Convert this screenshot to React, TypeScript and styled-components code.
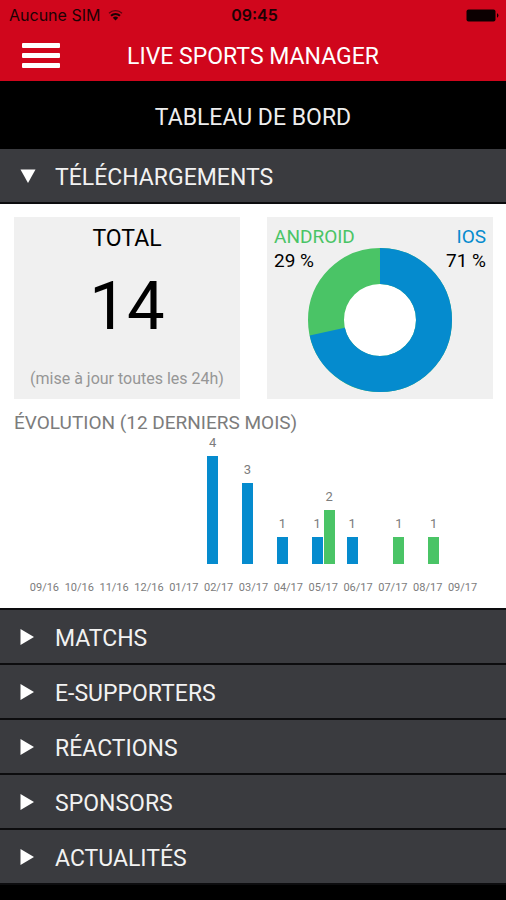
import React, { useState } from "react";
import styled, { createGlobalStyle } from "styled-components";

const colors = {
  red: "#d0061c",
  panel: "#3a3b3f",
  line: "#0c0c0e",
  card: "#f0f0f0",
  blue: "#058bce",
  green: "#4ac466",
  grey: "#7c7c7c",
};

const GlobalStyle = createGlobalStyle`
  * { box-sizing: border-box; }
  body {
    margin: 0;
    background: #000;
    font-family: Roboto, "Liberation Sans", sans-serif;
  }
  h1, h2, h3, p, dl, dt, dd { margin: 0; font-weight: 400; }
`;

const Header = styled.header`
  background: ${colors.red};
`;

const StatusBar = styled.div`
  display: grid;
  grid-template-columns: 1fr auto 1fr;
  align-items: center;
  height: 30px;
  padding: 0 6px 0 9px;
  color: #1c0204;
  font: 400 16px/30px Inter, sans-serif;
`;

const Carrier = styled.div`
  display: flex;
  align-items: center;
  gap: 8px;
`;

const Clock = styled.time`
  font-weight: 600;
`;

const BatterySlot = styled.div`
  display: flex;
  justify-content: flex-end;
`;

const NavBar = styled.div`
  display: grid;
  grid-template-columns: 38px 1fr 38px;
  align-items: center;
  height: 51px;
  padding: 0 22px;
`;

const MenuButton = styled.button`
  display: grid;
  gap: 5px;
  padding: 0;
  border: 0;
  background: none;
  cursor: pointer;
`;

const MenuBar = styled.span`
  height: 5px;
  border-radius: 1px;
  background: #fff;
`;

const AppTitle = styled.h1`
  padding-top: 2px;
  color: #fff;
  font-size: 23px;
  line-height: 28px;
  text-align: center;
`;

const PageTitle = styled.h2`
  padding: 23px 0 17px;
  background: #000;
  color: #eee;
  font-size: 23px;
  line-height: 28px;
  text-align: center;
`;

const SectionButton = styled.button`
  display: flex;
  align-items: center;
  width: 100%;
  height: 55px;
  padding: 5px 20px 0;
  border: 0;
  border-bottom: 2px solid ${colors.line};
  background: ${colors.panel};
  color: #f2f2f2;
  font: 400 23px/28px Roboto, sans-serif;
  text-align: left;
  cursor: pointer;
`;

const Marker = styled.svg`
  flex: none;
  width: 16px;
  height: 16px;
  margin: 0 19px 5px 0;
  fill: #fff;
`;

const Panel = styled.section`
  padding: 13px 13px 12px 14px;
  border-bottom: 2px solid ${colors.line};
  background: #fff;
`;

const Cards = styled.div`
  display: grid;
  grid-template-columns: 1fr 1fr;
  gap: 27px;
`;

const TotalCard = styled.article`
  display: flex;
  flex-direction: column;
  align-items: center;
  height: 182px;
  padding: 8px 0;
  background: ${colors.card};
`;

const CardTitle = styled.h3`
  font-size: 23px;
  line-height: 28px;
`;

const TotalValue = styled.p`
  padding-top: 15px;
  font-size: 67px;
  line-height: 76px;
`;

const Note = styled.p`
  margin-top: auto;
  color: #969696;
  font-size: 16px;
  line-height: 24px;
`;

const ShareCard = styled.article`
  display: grid;
  justify-items: center;
  align-items: start;
  height: 182px;
  background: ${colors.card};
  & > * { grid-area: 1 / 1; }
`;

const Shares = styled.dl`
  display: flex;
  justify-content: space-between;
  width: 100%;
  padding: 8px 7px;
  font-size: 19px;
  line-height: 24px;
`;

const Share = styled.div<{ $align: "left" | "right" }>`
  text-align: ${(p) => p.$align};
`;

const ShareName = styled.dt<{ $color: string }>`
  color: ${(p) => p.$color};
`;

const Donut = styled.svg`
  width: 144px;
  height: 144px;
  margin-top: 31px;
`;

const ChartTitle = styled.h3`
  padding-top: 12px;
  color: ${colors.grey};
  font-size: 19px;
  line-height: 24px;
`;

const Chart = styled.div`
  display: grid;
  grid-template-columns: repeat(13, 1fr);
  padding: 0 13px;
`;

const Month = styled.div`
  display: grid;
  justify-items: center;
`;

const Bars = styled.div`
  display: flex;
  align-items: flex-end;
  gap: 1px;
  height: 129px;
`;

const BarSlot = styled.div`
  width: 11px;
  color: ${colors.grey};
  font-size: 13px;
  line-height: 16px;
  text-align: center;
`;

const Bar = styled.div<{ $color: string; $value: number }>`
  height: ${(p) => p.$value * 27}px;
  margin-top: 5px;
  background: ${(p) => p.$color};
`;

const MonthLabel = styled.span`
  padding-top: 16px;
  color: ${colors.grey};
  font-size: 11px;
  line-height: 16px;
`;

const months = [
  { label: "09/16", ios: 0, android: 0 },
  { label: "10/16", ios: 0, android: 0 },
  { label: "11/16", ios: 0, android: 0 },
  { label: "12/16", ios: 0, android: 0 },
  { label: "01/17", ios: 0, android: 0 },
  { label: "02/17", ios: 4, android: 0 },
  { label: "03/17", ios: 3, android: 0 },
  { label: "04/17", ios: 1, android: 0 },
  { label: "05/17", ios: 1, android: 2 },
  { label: "06/17", ios: 1, android: 0 },
  { label: "07/17", ios: 0, android: 1 },
  { label: "08/17", ios: 0, android: 1 },
  { label: "09/17", ios: 0, android: 0 },
];

function WifiIcon() {
  return (
    <svg width="15" height="12" viewBox="0 0 15 12" aria-label="Wi-Fi" fill="none">
      <path d="M1 4.3a9.4 9.4 0 0 1 13 0" stroke="#1c0204" strokeWidth="1.3" opacity="0.65" />
      <path d="M3 6.7a6.6 6.6 0 0 1 9 0" stroke="#1c0204" strokeWidth="2" />
      <path d="M4.8 8.7a4 4 0 0 1 5.4 0L7.5 11.6z" fill="#1c0204" />
    </svg>
  );
}

function BatteryIcon() {
  return (
    <svg width="34" height="13" viewBox="0 0 34 13" aria-label="Batterie">
      <rect x="0.5" y="0.5" width="29" height="12" rx="2" fill="#0c0001" />
      <path d="M31 4.3a2.4 2.4 0 0 1 0 4.4z" fill="#0c0001" />
    </svg>
  );
}

function DonutChart() {
  const r = 54;
  const length = 2 * Math.PI * r;
  const ios = (length * 10) / 14;
  return (
    <Donut viewBox="0 0 144 144" role="img" aria-label="iOS 71 %, Android 29 %">
      <circle cx="72" cy="72" r="37" fill="#fff" />
      <g fill="none" strokeWidth="36" transform="rotate(-90 72 72)">
        <circle cx="72" cy="72" r={r} stroke={colors.green} />
        <circle cx="72" cy="72" r={r} stroke={colors.blue} strokeDasharray={`${ios} ${length}`} />
      </g>
    </Donut>
  );
}

function ValueBar({ value, color }: { value: number; color: string }) {
  return (
    <BarSlot>
      {value > 0 && (
        <>
          {value}
          <Bar $color={color} $value={value} />
        </>
      )}
    </BarSlot>
  );
}

function Downloads() {
  return (
    <Panel>
      <Cards>
        <TotalCard>
          <CardTitle>TOTAL</CardTitle>
          <TotalValue>14</TotalValue>
          <Note>(mise à jour toutes les 24h)</Note>
        </TotalCard>
        <ShareCard>
          <DonutChart />
          <Shares>
            <Share $align="left">
              <ShareName $color={colors.green}>ANDROID</ShareName>
              <dd>29 %</dd>
            </Share>
            <Share $align="right">
              <ShareName $color={colors.blue}>IOS</ShareName>
              <dd>71 %</dd>
            </Share>
          </Shares>
        </ShareCard>
      </Cards>
      <ChartTitle>ÉVOLUTION (12 DERNIERS MOIS)</ChartTitle>
      <Chart>
        {months.map((m) => (
          <Month key={m.label}>
            <Bars>
              <ValueBar value={m.ios} color={colors.blue} />
              <ValueBar value={m.android} color={colors.green} />
            </Bars>
            <MonthLabel>{m.label}</MonthLabel>
          </Month>
        ))}
      </Chart>
    </Panel>
  );
}

const sections = ["TÉLÉCHARGEMENTS", "MATCHS", "E-SUPPORTERS", "RÉACTIONS", "SPONSORS", "ACTUALITÉS"];

export default function App() {
  const [open, setOpen] = useState("TÉLÉCHARGEMENTS");
  return (
    <>
      <GlobalStyle />
      <Header>
        <StatusBar>
          <Carrier>
            Aucune SIM
            <WifiIcon />
          </Carrier>
          <Clock>09:45</Clock>
          <BatterySlot>
            <BatteryIcon />
          </BatterySlot>
        </StatusBar>
        <NavBar>
          <MenuButton aria-label="Menu">
            <MenuBar />
            <MenuBar />
            <MenuBar />
          </MenuButton>
          <AppTitle>LIVE SPORTS MANAGER</AppTitle>
        </NavBar>
      </Header>
      <main>
        <PageTitle>TABLEAU DE BORD</PageTitle>
        {sections.map((name) => (
          <React.Fragment key={name}>
            <SectionButton
              aria-expanded={open === name}
              onClick={() => setOpen(open === name ? "" : name)}
            >
              <Marker viewBox="0 0 16 16" aria-hidden="true">
                {open === name ? <path d="M0.5 1.5h15L8 15z" /> : <path d="M0.5 0v16L14 8z" />}
              </Marker>
              {name}
            </SectionButton>
            {open === name && name === "TÉLÉCHARGEMENTS" && <Downloads />}
          </React.Fragment>
        ))}
      </main>
    </>
  );
}
